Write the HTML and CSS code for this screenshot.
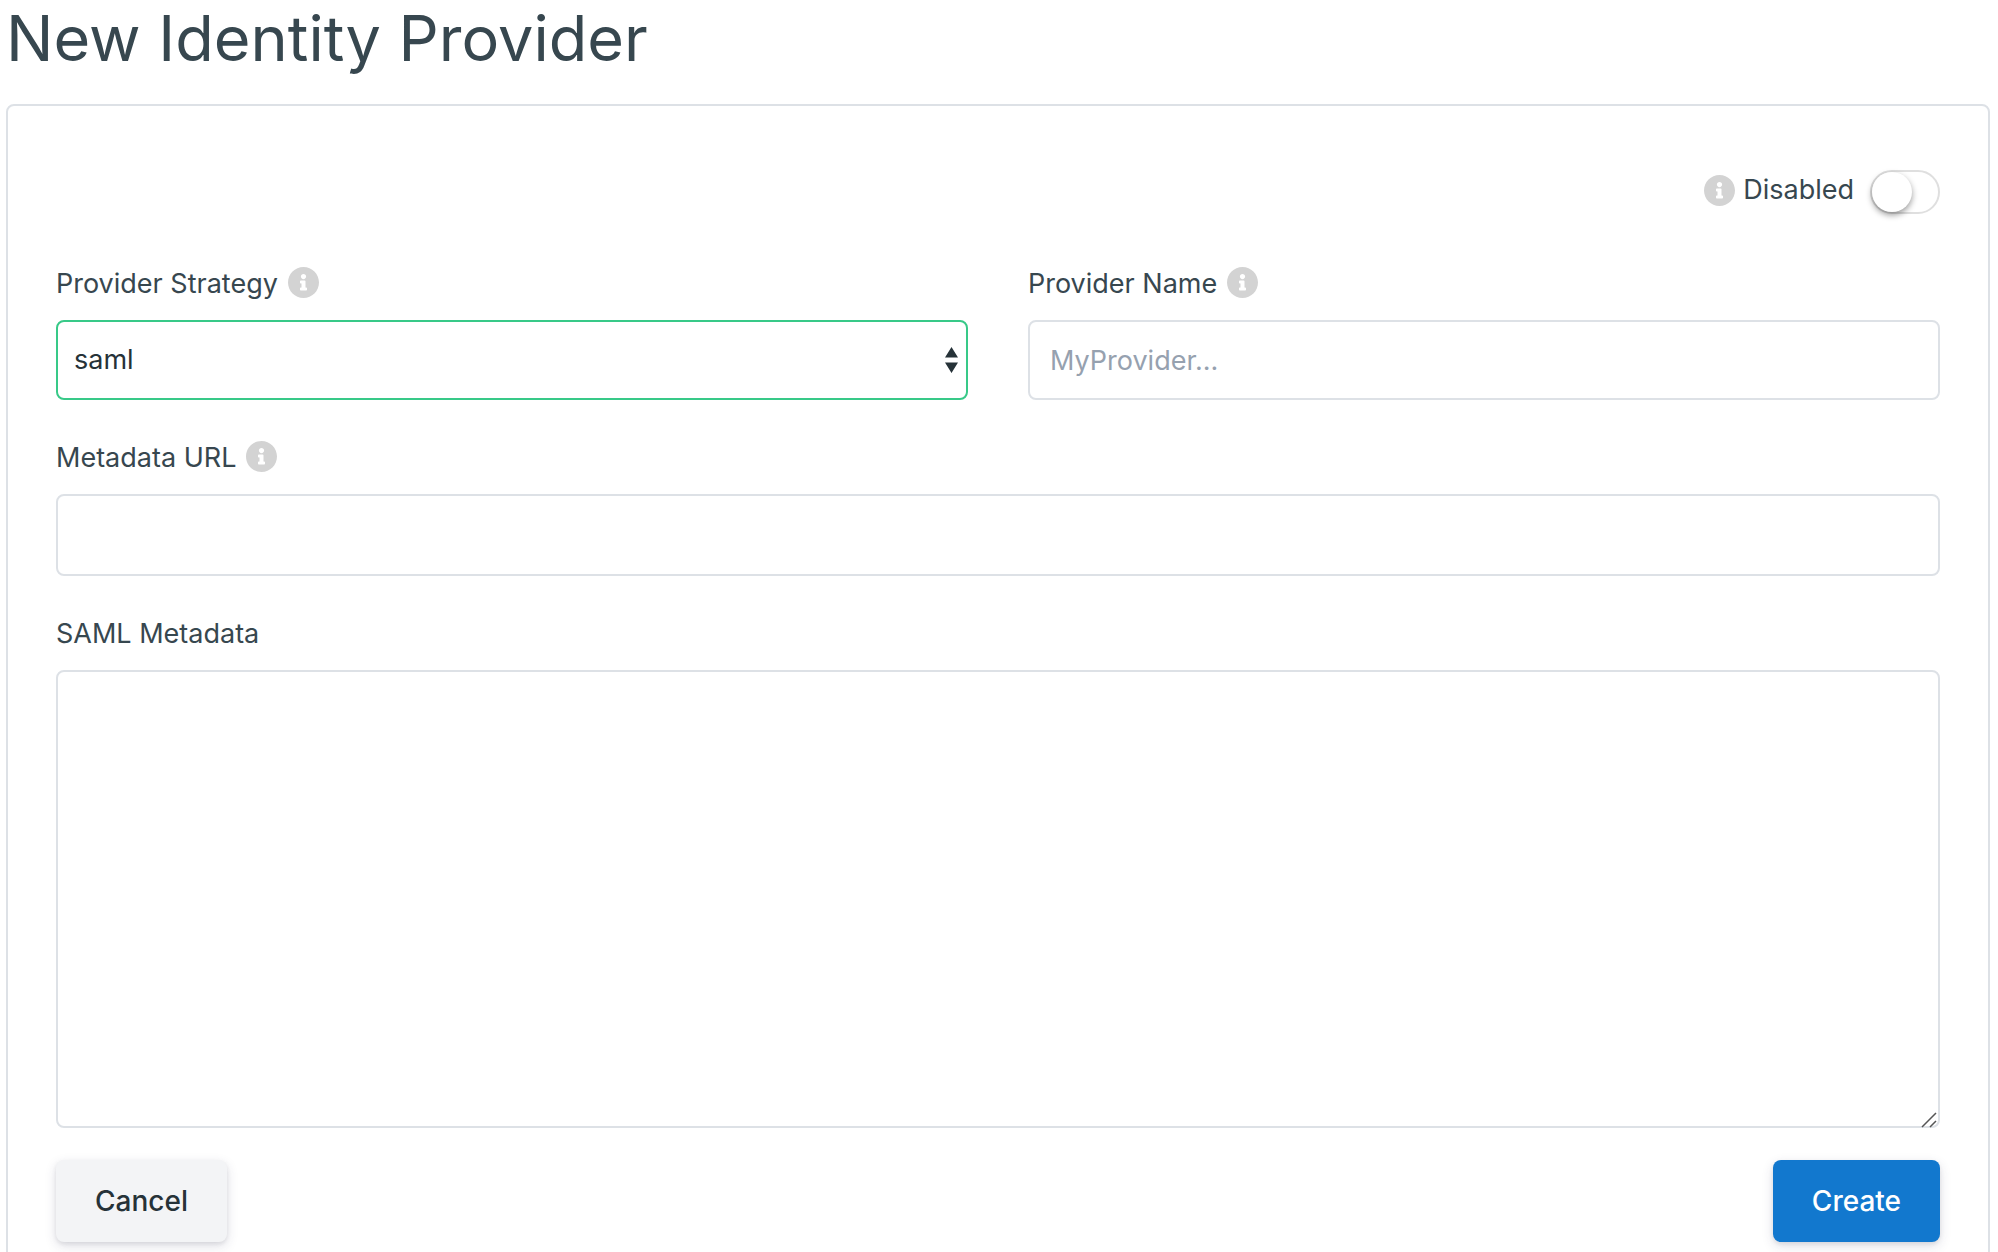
FILE: index.html
```html
<!DOCTYPE html>
<html lang="en">
<head>
<meta charset="utf-8">
<meta name="viewport" content="width=device-width, initial-scale=1">
<title>New Identity Provider</title>
<link rel="stylesheet" href="styles.css">
</head>
<body>
<svg class="sprite" aria-hidden="true">
  <symbol id="info" viewBox="8 8 496 496">
    <path fill="currentColor" d="M256 8C119.043 8 8 119.083 8 256c0 136.997 111.043 248 248 248s248-111.003 248-248C504 119.083 392.957 8 256 8zm0 110c23.196 0 42 18.804 42 42s-18.804 42-42 42-42-18.804-42-42 18.804-42 42-42zm56 254c0 6.627-5.373 12-12 12h-88c-6.627 0-12-5.373-12-12v-24c0-6.627 5.373-12 12-12h12v-64h-12c-6.627 0-12-5.373-12-12v-24c0-6.627 5.373-12 12-12h64c6.627 0 12 5.373 12 12v100h12c6.627 0 12 5.373 12 12v24z"/>
  </symbol>
</svg>
<main class="page">
  <h1 class="title">New Identity Provider</h1>
  <form class="card">
    <div class="status">
      <div class="status-text">
        <svg class="info" aria-hidden="true"><use href="#info"/></svg>
        <label for="enabled">Disabled</label>
      </div>
      <input class="toggle" type="checkbox" role="switch" id="enabled">
    </div>
    <div class="columns">
      <div class="field">
        <div class="label-row">
          <label class="label" for="strategy">Provider Strategy</label>
          <svg class="info" aria-hidden="true"><use href="#info"/></svg>
        </div>
        <div class="select-wrap">
          <select class="control select" id="strategy"><option>saml</option></select>
          <svg class="arrows" viewBox="0 0 13 26" aria-hidden="true"><path fill="currentColor" d="M0 10.500 6.500 0 13 10.500zM0 15.500h13L6.500 26z"/></svg>
        </div>
      </div>
      <div class="field">
        <div class="label-row">
          <label class="label" for="name">Provider Name</label>
          <svg class="info" aria-hidden="true"><use href="#info"/></svg>
        </div>
        <input class="control" type="text" id="name" placeholder="MyProvider...">
      </div>
    </div>
    <div class="field">
      <div class="label-row">
        <label class="label" for="url">Metadata URL</label>
        <svg class="info" aria-hidden="true"><use href="#info"/></svg>
      </div>
      <input class="control" type="text" id="url">
    </div>
    <div class="field">
      <div class="label-row">
        <label class="label" for="metadata">SAML Metadata</label>
      </div>
      <div class="area-wrap">
        <textarea class="control area" id="metadata"></textarea>
        <svg class="grip" viewBox="0 0 16 16" aria-hidden="true"><path d="M1 15 15 1M9 15l6-6" fill="none" stroke="currentColor" stroke-width="1.500"/></svg>
      </div>
    </div>
    <div class="actions">
      <button class="button" type="button">Cancel</button>
      <button class="button primary" type="submit">Create</button>
    </div>
  </form>
</main>
</body>
</html>
```

FILE: styles.css
```css
*,
*::before {
  box-sizing: border-box;
}

body {
  margin: 0;
  background: #fff;
  color: #37474f;
  font-family: Inter, "Liberation Sans", sans-serif;
  font-size: 27px;
  line-height: 40px;
}

.sprite {
  position: absolute;
  width: 0;
  height: 0;
}

.page {
  padding: 0 8px 48px 6px;
}

.title {
  margin: 0 0 28px;
  font-size: 63px;
  font-weight: 400;
  line-height: 76px;
}

.card {
  display: flex;
  flex-direction: column;
  padding: 64px 48px 48px;
  border: 2px solid #dde1e6;
  border-radius: 8px;
}

.status {
  display: flex;
  align-items: center;
  justify-content: flex-end;
  gap: 16px;
  margin-bottom: 48px;
}

.status-text {
  display: flex;
  align-items: center;
  gap: 8px;
  padding-bottom: 4px;
}

.info {
  flex: none;
  width: 31px;
  height: 31px;
  color: #d3d3d3;
}

.toggle {
  appearance: none;
  flex: none;
  width: 70px;
  height: 44px;
  margin: 0;
  border: 2px solid #dfdfdf;
  border-radius: 22px;
  background: #fff;
}

.toggle::before {
  content: "";
  display: block;
  width: 40px;
  height: 40px;
  border-radius: 50%;
  background: #fff;
  box-shadow: 0 3px 6px rgba(0, 0, 0, 0.4);
}

.toggle:checked::before {
  margin-left: auto;
}

.columns {
  display: grid;
  grid-template-columns: 1fr 1fr;
  gap: 60px;
}

.field {
  margin-bottom: 36px;
}

.label-row {
  display: flex;
  align-items: center;
  gap: 10px;
  height: 40px;
  margin-bottom: 18px;
}

.label {
  padding-top: 4px;
}

.control {
  display: block;
  width: 100%;
  height: 82px;
  margin: 0;
  padding: 0 20px;
  border: 2px solid #dde1e6;
  border-radius: 8px;
  background: #fff;
  color: #263238;
  font: inherit;
}

.control::placeholder {
  color: #96a1af;
  opacity: 1;
}

.columns .control {
  height: 80px;
}

.select-wrap,
.area-wrap {
  position: relative;
}

.columns .select {
  appearance: none;
  padding: 0 16px;
  border-color: #38c988;
}

.arrows {
  position: absolute;
  top: 27px;
  right: 10px;
  width: 13px;
  height: 26px;
  color: #263238;
  pointer-events: none;
}

.area {
  height: 458px;
  padding: 16px 20px;
  resize: none;
}

.grip {
  position: absolute;
  right: 3px;
  bottom: 0;
  width: 16px;
  height: 16px;
  color: #555;
  pointer-events: none;
}

.actions {
  display: flex;
  justify-content: space-between;
  margin-top: -4px;
}

.button {
  height: 82px;
  padding: 0 39px;
  border: 0;
  border-radius: 8px;
  background: #f3f4f6;
  color: #263238;
  font: inherit;
  font-size: 28px;
  font-weight: 500;
  box-shadow: 0 4px 12px rgba(50, 50, 93, 0.15), 0 2px 4px rgba(0, 0, 0, 0.08);
}

.primary {
  background: #1278ce;
  color: #fff;
}
```
